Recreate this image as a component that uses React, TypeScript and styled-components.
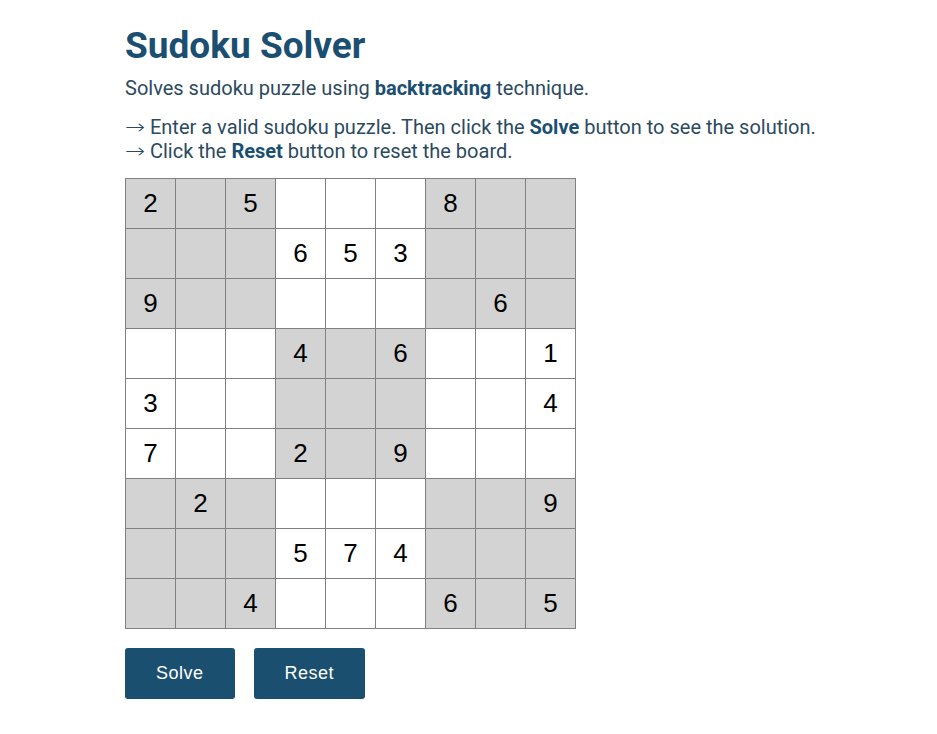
import React from "react";
import styled, { createGlobalStyle } from "styled-components";

const GlobalStyle = createGlobalStyle`
  html, body { margin: 0; padding: 0; background: #ffffff; }
  body { font-family: Roboto, "Noto Sans", Arial, sans-serif; }
`;

const Page = styled.main`
  padding: 24px 0 0 125px;
  color: #2c4a60;
`;

const Title = styled.h1`
  margin: 0;
  font-size: 37px;
  line-height: 44px;
  font-weight: 700;
  color: #1b4f72;
`;

const Lead = styled.p`
  margin: 8px 0 0;
  font-size: 20px;
  line-height: 24px;
`;

const Notes = styled.p`
  margin: 15px 0 0;
  font-size: 20px;
  line-height: 24px;
`;

const Arrow = styled.span`
  display: inline-block;
  width: 20px;
  font-family: "DejaVu Sans", sans-serif;
  font-weight: 200;
  transform: scaleX(1.2);
  transform-origin: left center;
`;

const Strong = styled.strong`
  font-weight: 700;
  color: #1b4f72;
`;

const Board = styled.table`
  margin-top: 15px;
  border-collapse: collapse;
  font-family: "Liberation Sans", Arial, sans-serif;
`;

const Cell = styled.td<{ $shaded: boolean }>`
  width: 49px;
  height: 49px;
  padding: 0;
  border: 1px solid #808080;
  background: ${(p) => (p.$shaded ? "#d3d3d3" : "#ffffff")};
  color: #000000;
  font-size: 26px;
  text-align: center;
  vertical-align: middle;
`;

const Actions = styled.div`
  display: flex;
  gap: 19px;
  margin-top: 19px;
`;

const Button = styled.button`
  height: 51px;
  padding: 0 31px;
  border: none;
  border-radius: 3px;
  background: #1b4f6f;
  color: #ffffff;
  font-family: "Liberation Sans", Arial, sans-serif;
  font-size: 18px;
  letter-spacing: 0.5px;
  cursor: pointer;
`;

const puzzle = [
  "2.5...8..",
  "...653...",
  "9......6.",
  "...4.6..1",
  "3.......4",
  "7..2.9...",
  ".2......9",
  "...574...",
  "..4...6.5",
];

export default function App() {
  return (
    <>
      <GlobalStyle />
      <Page>
        <Title>Sudoku Solver</Title>
        <Lead>
          Solves sudoku puzzle using <Strong>backtracking</Strong> technique.
        </Lead>
        <Notes>
          <Arrow>→</Arrow> Enter a valid sudoku puzzle. Then click the <Strong>Solve</Strong> button to see the solution.
          <br />
          <Arrow>→</Arrow> Click the <Strong>Reset</Strong> button to reset the board.
        </Notes>
        <Board>
          <tbody>
            {puzzle.map((row, r) => (
              <tr key={r}>
                {row.split("").map((ch, c) => {
                  const shaded = (Math.floor(r / 3) + Math.floor(c / 3)) % 2 === 0;
                  return (
                    <Cell key={c} $shaded={shaded}>
                      {ch === "." ? "" : ch}
                    </Cell>
                  );
                })}
              </tr>
            ))}
          </tbody>
        </Board>
        <Actions>
          <Button>Solve</Button>
          <Button>Reset</Button>
        </Actions>
      </Page>
    </>
  );
}
